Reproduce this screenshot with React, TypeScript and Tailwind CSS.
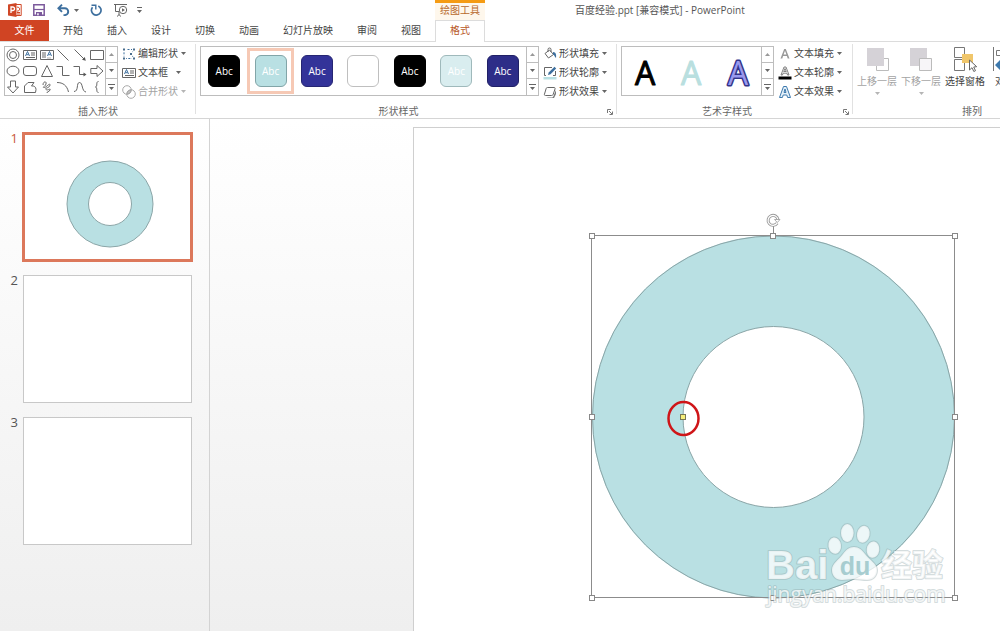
import React from "react";

type Children = { children: React.ReactNode };

const Caret = ({ dim = false }: { dim?: boolean }) => (
  <svg width="5" height="3" viewBox="0 0 5 3" className={dim ? "shrink-0 text-[#b5b5b5]" : "shrink-0 text-[#666666]"} aria-hidden="true">
    <path d="M0 0h5L2.5 3z" fill="currentColor" />
  </svg>
);

const Icon = ({ children }: Children) => (
  <svg width="14" height="14" viewBox="0 0 14 14" className="shrink-0" fill="none" stroke="#666" strokeWidth="1" aria-hidden="true">
    {children}
  </svg>
);

/* ---------- Title bar ---------- */

const QuickAccess = () => (
  <div className="flex w-[435px] shrink-0 items-center pl-2">
    <svg width="14" height="14" viewBox="0 0 14 14" aria-label="PowerPoint" role="img">
      <path d="M7 1.5h6.2v11H7z" fill="#fff" stroke="#d04727" strokeWidth="1" />
      <path d="M9 4.2a2 2 0 1 1 0 3.8M9 9.5h3M9 11h3" fill="none" stroke="#d04727" strokeWidth="1" />
      <path d="M0 1.6 8.5 0v14L0 12.4z" fill="#d04727" />
      <path d="M3 10V4h1.8a1.7 1.7 0 0 1 0 3.5H3" fill="none" stroke="#fff" strokeWidth="1.3" />
    </svg>
    <button aria-label="保存" className="ml-[11px]">
      <svg width="12" height="12" viewBox="0 0 12 12" fill="none" stroke="#7c5a9c" strokeWidth="1.5">
        <path d="M.8.8h10.4v10.4H.8z" />
        <path d="M1 5.5h10" strokeWidth="1.2" />
        <path d="M3 8h6v3.2H3z" fill="#7c5a9c" stroke="none" />
        <path d="M4.2 9.2h1.5v2H4.2z" fill="#fff" stroke="none" />
      </svg>
    </button>
    <button aria-label="撤消" className="ml-3 flex items-center gap-1">
      <svg width="13" height="12" viewBox="0 0 13 12" fill="none" stroke="#3d6f9e" strokeWidth="1.9">
        <path d="M5 .7 1.400 4.300 5 7.900M1.800 4.300h6a3.400 3.400 0 0 1 0 6.800H6.500" />
      </svg>
      <Caret />
    </button>
    <button aria-label="重复" className="ml-[11px]">
      <svg width="12" height="12" viewBox="0 0 12 12" fill="none" stroke="#3d6f9e" strokeWidth="1.700">
        <path d="M8.300 1.900A4.800 4.800 0 1 1 2.500 3.200" />
        <path d="M1.500 1.300h4.300v4.200" strokeWidth="1.400" />
      </svg>
    </button>
    <button aria-label="从头开始放映" className="ml-3">
      <svg width="14" height="14" viewBox="0 0 14 14" fill="none" stroke="#666">
        <path d="M0 1.5h13M1.5 1.5v7h4M5 8.5v3.5M3 13.5l2-1.8 2 1.8" />
        <circle cx="9" cy="7" r="3.7" fill="#fff" />
        <path d="m8 5.2 3 1.8-3 1.8z" fill="#666" stroke="none" />
      </svg>
    </button>
    <button aria-label="自定义快速访问工具栏" className="ml-[9px]">
      <svg width="5" height="6" viewBox="0 0 5 6">
        <path d="M0 0h5v1H0zM0 3h5L2.5 6z" fill="#666" />
      </svg>
    </button>
  </div>
);

const tabs = ["开始", "插入", "设计", "切换", "动画", "幻灯片放映", "审阅", "视图"];

const Header = () => (
  <header>
    <div className="flex h-5">
      <QuickAccess />
      <div className="w-[50px] shrink-0 border-t-[3px] border-[#f59b13] bg-[#fef7ec] text-center leading-[15px] text-[#b8692b]">绘图工具</div>
      <h1 className="ml-[90px] whitespace-nowrap leading-5 text-[#555555]">百度经验.ppt [兼容模式] - PowerPoint</h1>
    </div>
    <nav className="flex h-[22px] border-b border-[#dcdcdc]">
      <button className="mr-[2px] w-[49px] bg-[#d04423] text-white">文件</button>
      {tabs.map((t) => (
        <button key={t} className="px-3">{t}</button>
      ))}
      <button className="-mb-px ml-[2px] w-[50px] border-x border-t border-[#dcdcdc] bg-white pb-[2px] text-[#b8581f]">格式</button>
    </nav>
  </header>
);

/* ---------- Ribbon ---------- */

const Group = ({ label, launcher, className, children }: Children & { label: string; launcher?: boolean; className: string }) => (
  <section className={`relative flex shrink-0 flex-col pt-1 ${className}`}>
    <div className="flex h-[50px]">{children}</div>
    <div className={`mt-2 text-center leading-[14px] text-[#666666] ${launcher ? "pr-5" : "pr-1"}`}>{label}</div>
    {launcher && (
      <button aria-label={label + "选项"} className="absolute right-1 bottom-[3px]">
        <svg width="6" height="6" viewBox="0 0 6 6" fill="none" stroke="#777">
          <path d="M.5 4V.5H4M2 2l3 3M5.5 2.5v3h-3" />
        </svg>
      </button>
    )}
    <span className="absolute top-[2px] right-0 bottom-1 w-px bg-[#e1e1e1]" />
  </section>
);

const Scroller = () => (
  <div className="grid w-3 shrink-0 grid-rows-3 divide-y divide-[#bdbdbd] border-l border-[#bdbdbd]">
    <button aria-label="上一行" className="flex items-center justify-center">
      <svg width="5" height="3" viewBox="0 0 5 3"><path d="M0 3h5L2.5 0z" fill="#999" /></svg>
    </button>
    <button aria-label="下一行" className="flex items-center justify-center"><Caret /></button>
    <button aria-label="其他" className="flex items-center justify-center">
      <svg width="7" height="6" viewBox="0 0 7 6"><path d="M0 0h7v1H0zM1 3h5L3.5 6z" fill="#666" /></svg>
    </button>
  </div>
);

const textBoxIcon = (
  <>
    <path d="M.5 2.500h13v9H.5zM8 5h4M8 7h4M3 9.500h9" />
    <path d="m2.500 8 2-4.500 2 4.500M3.500 6.700h2" stroke="#3d6f9e" />
  </>
);

const shapes: [string, React.ReactNode][] = [
  ["同心圆", <><circle cx="7" cy="7" r="6" /><circle cx="7" cy="7" r="3.5" /></>],
  ["文本框", textBoxIcon],
  ["竖排文本框", <><path d="M.5 2.500h13v9H.5zM3 4v6M5 4v6M8 9.500v1M10 9.500v1" /><path d="m7.500 8 2-4.500 2 4.500M8.500 6.700h2" stroke="#3d6f9e" /></>],
  ["直线", <path d="m1.5 1.5 11 11" />],
  ["箭头", <><path d="m1.5 1.5 10 10" /><path d="M12.8 12.8 9 11.8l2.8-2.8z" fill="#555" stroke="none" /></>],
  ["矩形", <path d="M.5 2.5h13v9H.5z" />],
  ["椭圆", <ellipse cx="7" cy="7" rx="6" ry="4.8" />],
  ["圆角矩形", <rect x=".5" y="2.5" width="13" height="9" rx="2.5" />],
  ["三角形", <path d="M7 1.5 12.5 12.5h-11z" />],
  ["肘形连接符", <path d="M.5 2.5h6v9h7" />],
  ["肘形箭头", <><path d="M.5 2.5h6v8h5" /><path d="m13.5 10.5-3-2v4z" fill="#555" stroke="none" /></>],
  ["右箭头", <path d="M.8 4.5H7V1.5L13 7l-6 5.5v-3H.8z" />],
  ["下箭头", <path d="M4.500 1h5v6h3L7 13 1.500 7h3z" />],
  ["任意多边形", <path d="M1.500 12.500V6L5 2.500h6L8.500 6c2.500-.5 4.500 1 4.500 3.500l-.5 3z" />],
  ["自由曲线", <path d="M3 5c0-4 4-4 3-1S2 7 4 7.500 10 2 10 5 4 8 6 9.500s5-2 4 .5-3 1-3 3" />],
  ["弧形", <path d="M1 2.500c6 0 10 3 11.500 9.500" />],
  ["曲线", <path d="M1 11.500c5 0 2-9 5.500-9s2 9 6.500 9.500" />],
  ["左大括号", <path d="M8.500 1.500c-3 0-.5 5-3 5.500 2.500.5 0 5.500 3 5.500" />],
];

const styles = [
  { box: "bg-black border-black text-white", text: "Abc" },
  { box: "bg-[#b9e0e3] border-[#82a5a8] text-white", text: "Abc", selected: true },
  { box: "bg-[#333399] border-[#262673] text-white", text: "Abc" },
  { box: "bg-white border-[#bfbfbf] text-white", text: "" },
  { box: "bg-black border-black text-white", text: "Abc" },
  { box: "bg-[#d9edef] border-[#9fb9bb] text-white", text: "Abc" },
  { box: "bg-[#2d2d88] border-[#202066] text-white", text: "Abc" },
];

const Command = ({ icon, label, dim, wide }: { icon: React.ReactNode; label: string; dim?: boolean; wide?: boolean }) => (
  <button disabled={dim} className={`flex h-[19px] shrink-0 items-center whitespace-nowrap ${dim ? "text-[#a3a3a3]" : ""}`}>
    <Icon>{icon}</Icon>
    <span className={wide ? "mr-2 ml-[2px]" : "mr-[3px] ml-[2px]"}>{label}</span>
    <Caret dim={dim} />
  </button>
);

const Commands = ({ children }: Children) => <div className="-mt-[2px] ml-1 flex flex-col">{children}</div>;

const LargeButton = ({ icon, label, dim, caret, width }: { icon: React.ReactNode; label: string; dim?: boolean; caret?: boolean; width: string }) => (
  <button disabled={dim} className={`flex shrink-0 flex-col items-center whitespace-nowrap ${width} ${dim ? "text-[#a3a3a3]" : ""}`}>
    <svg width="24" height="26" viewBox="0 0 24 26" fill="none" aria-hidden="true">{icon}</svg>
    <span className="mt-[2px] leading-[14px]">{label}</span>
    {caret && <span className="mt-1"><Caret dim /></span>}
  </button>
);

const letterA = "M2.500 11.500 6.200 2h1.600l3.700 9.500H9.700L8.900 9H5.100l-.8 2.500zM5.600 7.500h2.800L7 3.800z";

const wordArt = [
  { fill: "#000000", stroke: "#000000", width: 1 },
  { fill: "#b9dfdf", stroke: "#b9dfdf", width: 1 },
  { fill: "#9999ee", stroke: "#333388", width: 3 },
];

const Ribbon = () => (
  <div className="flex overflow-hidden border-b border-[#d5d5d5] bg-white">
    <Group label="插入形状" className="w-[196px] pl-1">
      <div className="flex w-[114px] border border-[#bdbdbd]">
        <div className="grid flex-1 grid-cols-6 grid-rows-3">
          {shapes.map(([name, drawing]) => (
            <button key={name} aria-label={name} className="flex items-center justify-center">
              <Icon>{drawing}</Icon>
            </button>
          ))}
        </div>
        <Scroller />
      </div>
      <Commands>
        <Command label="编辑形状" icon={<><path d="M2 2.500h10L9 7l3 4.500H2z" strokeDasharray="2 1.500" stroke="#3d6f9e" /><path d="M.5 1h3v3h-3zM10.500 1h3v3h-3zM.5 10h3v3h-3zM10.500 10h3v3h-3zM7.500 5.500h3v3h-3z" fill="#4a6d8c" stroke="#fff" /></>} />
        <Command label="文本框" wide icon={textBoxIcon} />
        <Command label="合并形状" dim icon={<><circle cx="5" cy="5" r="4.300" stroke="#aaa" /><circle cx="9" cy="9" r="4.300" stroke="#aaa" /><path d="M5 9a4.300 4.300 0 0 1 4-4 4.300 4.300 0 0 1-4 4z" fill="#ccc" stroke="#aaa" /></>} />
      </Commands>
    </Group>

    <Group label="形状样式" launcher className="w-[421px] pl-1">
      <div className="flex w-[339px] border border-[#bdbdbd]">
        <div className="grid flex-1 grid-cols-7">
          {styles.map((s, i) => (
            <button key={i} aria-label={"样式 " + (i + 1)} className={`my-px flex items-center justify-center border-[3px] ${s.selected ? "border-[#f6c9b5]" : "border-transparent"}`}>
              <span className={`flex h-8 w-8 shrink-0 items-center justify-center rounded-md border ${s.box}`}>{s.text}</span>
            </button>
          ))}
        </div>
        <Scroller />
      </div>
      <Commands>
        <Command label="形状填充" icon={<><path d="M2 6.500 6.500 3l4 4.500L5.500 11zM5 5V2.500a1.500 1.500 0 0 1 3 0V5" /><path d="M10 5c3 0 3.500 3 3 6-1.500-1-1.500-3-3-3.500z" fill="#3d6f9e" stroke="none" /></>} />
        <Command label="形状轮廓" icon={<><path d="M9 1.500H1.500v8H3M12.500 5v4.500H10" /><path d="m5 9 .7-2.500L11.500.8l1.700 1.700L7.500 8.300z" fill="#3d6f9e" stroke="none" /><path d="M.5 11h13v2.500H.5z" fill="#b9e0e3" stroke="none" /></>} />
        <Command label="形状效果" icon={<><path d="M3.500 12.500h5c1 0 1.500-.5 2-1.500L13 5v4l-2 4H5z" fill="#777" stroke="none" /><path d="M4.500 2.500h6.500c1 0 1.300.5 1 1.500L10.300 9c-.3 1-.8 1.500-1.800 1.500H2.500c-1 0-1.300-.5-1-1.500L3 4c.3-1 .5-1.500 1.500-1.500z" fill="#fff" /></>} />
      </Commands>
    </Group>

    <Group label="艺术字样式" launcher className="w-[236px] pl-1">
      <div className="flex w-[153px] border border-[#bdbdbd]">
        <div className="grid flex-1 grid-cols-3">
          {wordArt.map((a, i) => (
            <button key={i} aria-label={"艺术字 " + (i + 1)} className="flex items-center justify-center">
              <svg width="36" height="48" viewBox="0 0 36 48" className="shrink-0 font-['Open_Sans'] text-[32px] font-medium">
                <text x="18" y="38" textAnchor="middle" fill={a.fill} stroke={a.stroke} strokeWidth={a.width} strokeLinejoin="round" paintOrder="stroke">A</text>
              </svg>
            </button>
          ))}
        </div>
        <Scroller />
      </div>
      <Commands>
        <Command label="文本填充" icon={<path d={letterA} fill="#999" stroke="none" />} />
        <Command label="文本轮廓" icon={<><path d="m3 9 3-8h2l3 8H9.500L9 7.200H5L4.500 9zM5.700 5.500h2.600L7 2.500z" strokeWidth=".8" /><path d="M.5 10.500h13v3H.5z" fill="#000" stroke="none" /></>} />
        <Command label="文本效果" icon={<path d="m1.500 12.500 4-11h3l4 11H9.600L8.800 10H5.200l-.8 2.500zM6 7.500h2L7 4z" stroke="#3d79ad" fill="#e4f0f9" />} />
      </Commands>
    </Group>

    <Group label="排列" className="w-[240px] pl-[2px]">
      <LargeButton width="w-11" dim caret label="上移一层" icon={<><path d="M11.500 12.500h12v12h-12z" fill="#fff" stroke="#bbb" /><path d="M2 2h17v18H2z" fill="#d5d2d7" /></>} />
      <LargeButton width="w-11" dim caret label="下移一层" icon={<><path d="M1 2h17v18H1z" fill="#d5d2d7" /><path d="M10.500 12.500h12v12h-12z" fill="#f7f5f8" stroke="#bbb" /></>} />
      <LargeButton width="w-11" label="选择窗格" icon={<><path d="M1.500 1.500h10v10h-10zM1.500 13.500h10v11h-10z" stroke="#777" /><path d="M9 8h11v9H9z" fill="#f0c66b" /><path d="M16.500 14v10l2.500-2.300 1.800 3.800 1.700-.8-1.800-3.700 3-.3z" fill="#fff" stroke="#666" /></>} />
      <LargeButton width="w-9" label="对齐" icon={<><path d="M.5 1v24" stroke="#777" /><path d="M3.500 4.500h12v5h-12z" stroke="#777" /><path d="m2 19 5-5v3h10v4H7v3z" fill="#3d79ad" /></>} />
    </Group>
  </div>
);

/* ---------- Slides ---------- */

const Thumbnails = () => (
  <aside className="flex w-[210px] shrink-0 flex-col gap-3 border-r border-[#d3d3d3] pt-[13px]">
    {[1, 2, 3].map((n) => (
      <div key={n} className="flex h-[130px]">
        <span className={`w-[22px] pr-1 text-right text-[13px] leading-3 ${n === 1 ? "text-[#c8583a]" : "text-[#555555]"}`}>{n}</span>
        <button aria-label={"幻灯片 " + n} className={`flex items-center justify-center bg-white ${n === 1 ? "w-[171px] border-[3px] border-[#dc785b]" : "m-px w-[169px] border border-[#c8c8c8]"}`}>
          {n === 1 && (
            <svg width="88" height="88" viewBox="0 0 88 88" className="mt-[14px] ml-1 shrink-0">
              <circle cx="44" cy="44" r="32.200" fill="none" stroke="#b9e0e3" strokeWidth="21.500" />
              <circle cx="44" cy="44" r="43" fill="none" stroke="#8aa5a7" />
              <circle cx="44" cy="44" r="21.500" fill="#fff" stroke="#8aa5a7" />
            </svg>
          )}
        </button>
      </div>
    ))}
  </aside>
);

const handles = [
  [592, 236], [773, 236], [955, 236],
  [592, 417], [955, 417],
  [592, 598], [773, 598], [955, 598],
];

const Slide = () => (
  <main className="relative mt-2 ml-[203px] flex-1 overflow-hidden border-t border-l border-[#cfcfcf] bg-white">
    <svg width="586" height="503" viewBox="414 128 586 503" className="absolute top-0 left-0">
      <circle cx="773.500" cy="417" r="136" fill="none" stroke="#b9e0e3" strokeWidth="91" />
      <circle cx="773.500" cy="417" r="181" fill="none" stroke="#8aa5a7" />
      <circle cx="773.500" cy="417" r="90.500" fill="none" stroke="#8aa5a7" />
      <path d="M591.500 235.500h363v362h-363z" fill="none" stroke="#8c8c8c" />
      <path d="M773.500 226v10" stroke="#8c8c8c" />
      {handles.map(([x, y]) => (
        <rect key={x + "-" + y} x={x - 2.5} y={y - 2.5} width="5" height="5" fill="#fff" stroke="#888" />
      ))}
      <g fill="none">
        <path d="M777.200 223.200A5 5 0 1 1 778 219.500" stroke="#999" strokeWidth="3" />
        <path d="M777.200 223.200A5 5 0 1 1 778 219.500" stroke="#fff" strokeWidth="1.200" />
        <path d="M774.500 219.500h5.500l-2.700 3z" fill="#fff" stroke="#999" strokeWidth=".8" />
      </g>
      <rect x="680.500" y="414.500" width="5" height="5" fill="#f6ee7a" stroke="#777755" />
      <ellipse cx="683.500" cy="418.500" rx="15" ry="16.500" fill="none" stroke="#cf1518" strokeWidth="2.500" />

      <g fill="#ffffff" fillOpacity=".75" stroke="#8fa6a8" strokeOpacity=".4" strokeWidth="2" strokeLinejoin="round" paintOrder="stroke">
        <text x="766" y="579" className="font-['Liberation_Sans'] text-[40px] font-bold">Bai</text>
        <ellipse cx="834.700" cy="545.700" rx="6.300" ry="8.200" transform="rotate(-8 834.700 545.700)" />
        <ellipse cx="847.300" cy="533" rx="6.300" ry="9" />
        <ellipse cx="863.300" cy="534.300" rx="6.300" ry="8.500" transform="rotate(12 863.300 534.300)" />
        <ellipse cx="873" cy="549.700" rx="6.300" ry="8.200" transform="rotate(8 873 549.700)" />
        <path d="M854 547c5 0 8 3 11 7 4 6 12 9 12 16 0 6-4 10-10 10-5 0-8-1-13-1s-8 1-12 1c-6 0-10-4-10-10 0-7 7-10 11-16 3-4 6-7 11-7z" />
        <text x="881" y="576" className="font-['Noto_Sans_CJK_SC'] text-[31px] font-bold">经验</text>
        <text x="767" y="602" className="font-['Open_Sans'] text-[21px]">jingyan.baidu.com</text>
      </g>
      <text x="855" y="575" textAnchor="middle" fill="#a7cdd0" className="font-['Liberation_Sans'] text-[25px] font-bold">du</text>
    </svg>
  </main>
);

export default function App() {
  return (
    <div className="flex min-h-screen flex-col overflow-hidden bg-white font-['Open_Sans','Noto_Sans_CJK_SC',sans-serif] text-[10px] text-[#444444]">
      <Header />
      <Ribbon />
      <div className="flex flex-1 bg-linear-to-b from-white to-[#efefef]">
        <Thumbnails />
        <Slide />
      </div>
    </div>
  );
}
